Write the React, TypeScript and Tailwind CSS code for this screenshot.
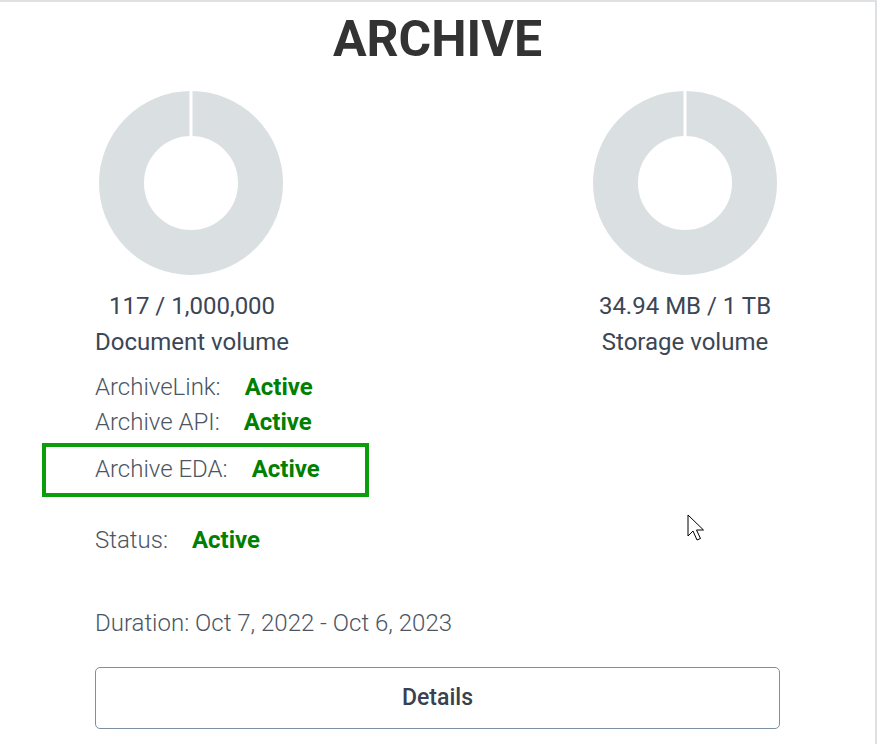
import React from "react";

function Donut() {
  return (
    <svg width="184" height="184" viewBox="0 0 184 184" className="block">
      <circle cx="92" cy="92" r="69.5" fill="none" stroke="#dadfe1" strokeWidth="45" />
      <rect x="90.5" y="0" width="3" height="45" fill="#ffffff" />
    </svg>
  );
}

function Row({ label }: { label: string }) {
  return (
    <div className="flex h-[35px] items-center leading-[35px]">
      <span className="font-light text-[#4b5563]">{label}</span>
      <span className="ml-[24px] font-bold text-[#008000]">Active</span>
    </div>
  );
}

export default function App() {
  return (
    <div
      className="relative h-[744px] w-[877px] overflow-hidden bg-white"
      style={{ fontFamily: "Roboto, 'Noto Sans', sans-serif" }}
    >
      <div className="relative h-[800px] w-[877px] border-t-2 border-r-2 border-[#dde1e4] pl-[95px] pr-[95px]">
        <h1 className="mt-[12px] text-center text-[50px] font-bold leading-none text-[#333333]">ARCHIVE</h1>

        <div className="mt-[27px] flex justify-between text-[24px] text-[#3b4656]">
          <div className="flex flex-col items-center">
            <div className="ml-[-3px]">
              <Donut />
            </div>
            <div className="mt-[13px] leading-[36px]">117 / 1,000,000</div>
            <div className="leading-[36px]">Document volume</div>
          </div>
          <div className="mr-[3px] flex w-[184px] flex-col items-center">
            <Donut />
            <div className="mt-[13px] leading-[36px]">34.94 MB / 1 TB</div>
            <div className="leading-[36px]">Storage volume</div>
          </div>
        </div>

        <div className="mt-[10px] text-[24px]">
          <Row label="ArchiveLink:" />
          <Row label="Archive API:" />
          <div className="relative mt-[12px]">
            <Row label="Archive EDA:" />
            <div className="pointer-events-none absolute left-[-53px] top-[-9px] h-[54px] w-[327px] border-[4px] border-[#0a9e0a]" />
          </div>
          <div className="mt-[36px]">
            <Row label="Status:" />
          </div>
          <div className="mt-[48px] h-[35px] font-light leading-[35px] text-[#4b5563]">
            Duration: Oct 7, 2022 - Oct 6, 2023
          </div>
        </div>

        <button className="mt-[26px] flex h-[62px] w-[685px] items-center justify-center rounded-[5px] border border-[#7d8fa3] bg-white text-[23px] font-medium text-[#374151]">
          Details
        </button>
      </div>

      <svg className="absolute left-[687px] top-[514px]" width="20" height="28" viewBox="0 0 20 28">
        <path d="M1 1 L1 22 L6 17 L10 26 L13.5 24.5 L9.5 16 L16.5 16 Z" fill="#ffffff" stroke="#000000" strokeWidth="1" strokeLinejoin="miter" />
      </svg>
    </div>
  );
}
